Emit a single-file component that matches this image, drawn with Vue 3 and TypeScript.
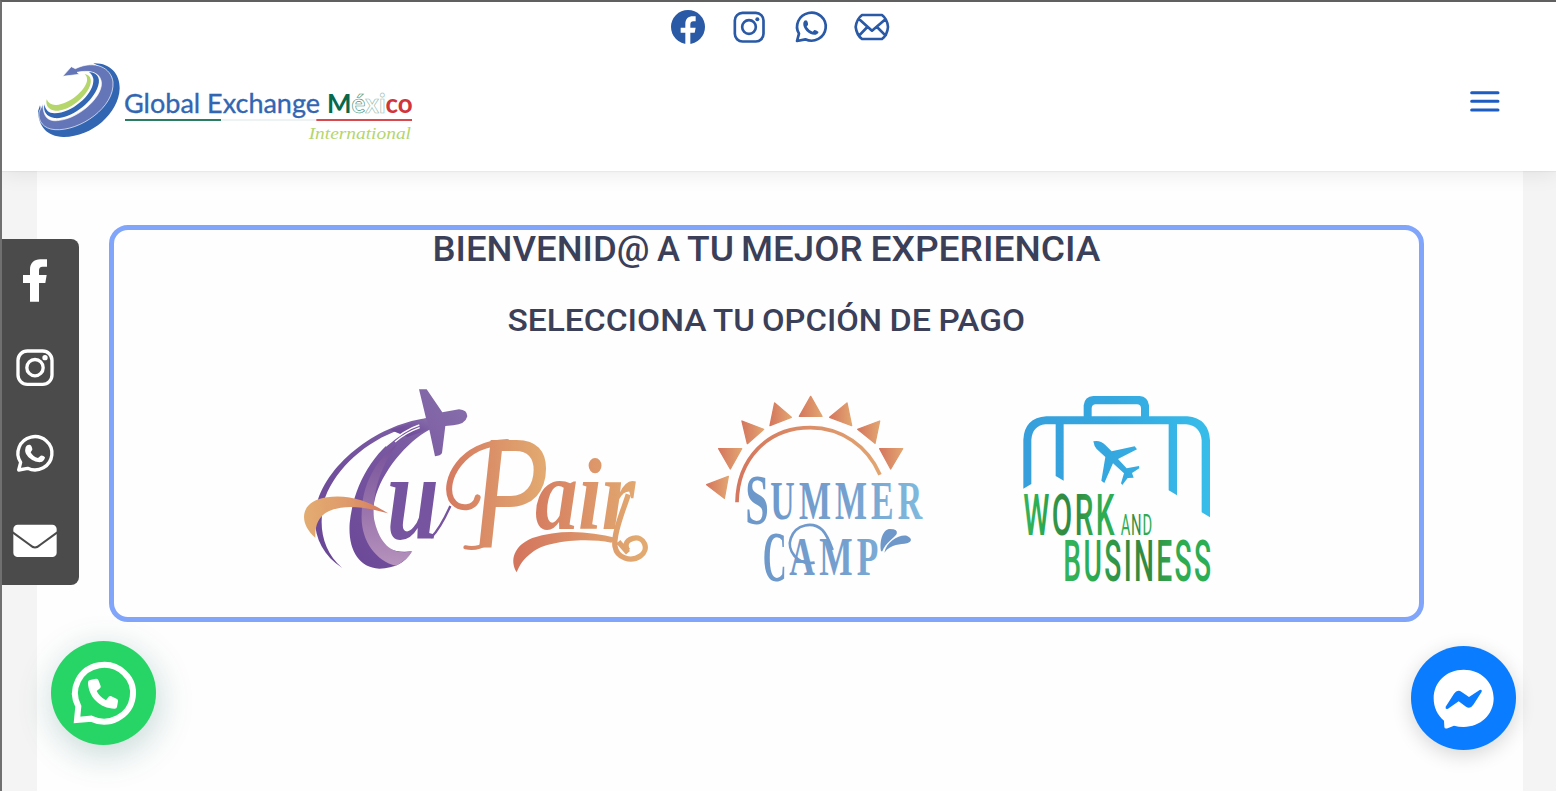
<script setup lang="ts">
type IconName = 'facebook' | 'instagram' | 'whatsapp' | 'mail'

interface Word {
  text: string
  x: number
  width: number
}

const channels: IconName[] = ['facebook', 'instagram', 'whatsapp', 'mail']
const titleWords: Word[] = [
  { text: 'BIENVENID@', x: 12.5, width: 217 },
  { text: 'A', x: 237, width: 23 },
  { text: 'TU', x: 267, width: 47 },
  { text: 'MEJOR', x: 321, width: 121.5 },
  { text: 'EXPERIENCIA', x: 450.5, width: 230 },
]
const subtitleWords: Word[] = [
  { text: 'SELECCIONA', x: 87.5, width: 199 },
  { text: 'TU', x: 293, width: 42 },
  { text: 'OPCIÓN', x: 342, width: 120 },
  { text: 'DE', x: 469.5, width: 41.5 },
  { text: 'PAGO', x: 518.5, width: 86.5 },
]
const rays: string[] = [
  'M362 49L396 109H328Z',
  'M254 69L304 112L240 137Z',
  'M156 123L221 148L172 191Z',
  'M86 206H155L121 267Z',
  'M50 314L115 289L103 355Z',
  'M471 69L485 137L419 112Z',
  'M569 123L555 190L503 148Z',
  'M569 206H638L602 267Z',
]
</script>

<template>
  <div class="page">
    <header class="header">
      <nav class="social">
        <a v-for="name in channels" :key="name" class="social-link" :aria-label="name">
          <svg v-if="name === 'facebook'" viewBox="0 0 108 108">
            <circle cx="54" cy="54" r="51" fill="currentColor" />
            <path d="M46 108V71H32V56H46V45C46 29 55 22 69 22H77V37H70C64 37 61 40 61 46V56H77L74 71H61V108Z" fill="#fff" />
          </svg>
          <svg v-else-if="name === 'instagram'" viewBox="0 0 108 108" class="line">
            <rect x="11.500" y="11.500" width="86" height="86" rx="23" />
            <circle cx="54" cy="54" r="20.500" />
            <circle cx="79" cy="31" r="6" class="dot" />
          </svg>
          <svg v-else-if="name === 'whatsapp'" viewBox="0 0 108 108" class="line">
            <path d="M18 74A43 42 0 1 1 37 91L12 96Z" />
            <path class="dot" d="M31 41Q33 34 39 34C43 34 46 44 45 47L41 53Q49 65 59 68L64 63Q68 62 76 68Q78 73 68 77C50 80 28 59 31 41Z" />
          </svg>
          <svg v-else viewBox="0 0 108 108" class="line mail">
            <path d="M24 18H84Q100 30 102 54Q100 78 84 90H24Q8 78 5 54Q8 30 24 18ZM14 29L54 65L96 29M40 54L13 82M69 54L97 82" />
          </svg>
        </a>
      </nav>
      <div class="brand-row">
        <svg class="brand" viewBox="0 0 1230 390">
          <path fill="#3266b2" d="M220 40C270 38 300 72 299 115C297 190 215 262 130 261C80 260 56 229 54 184L60 166C70 220 100 231 130 227C210 220 280 145 268 90Q259 55 220 40Z" />
          <path fill="#6576b8" stroke="#fff" stroke-width="2" d="M128 79L154 50L166 56C225 28 274 54 279 96C285 171 180 244 105 239C70 237 53 212 57 186L69 162C69 205 88 216 118 211C181 204 255 134 243 91C235 62 200 61 171 67L178 73Z" />
          <path fill="#3266b2" d="M207 66C238 68 243 91 231 117C210 165 145 209 103 204C79 201 69 184 73 163C76 181 88 191 105 190C153 190 218 137 220 94Q222 78 207 66Z" />
          <path fill="#b4d66b" d="M194 72C215 75 217 96 206 116C185 154 139 184 106 182C86 180 76 167 80 148C85 160 95 166 109 165C147 162 194 124 201 93Q203 80 194 72Z" />
          <text x="312" y="188" class="brand-name" textLength="588" lengthAdjust="spacingAndGlyphs">Global Exchange</text>
          <text x="921" y="188" class="brand-country" textLength="257" lengthAdjust="spacingAndGlyphs"><tspan class="green">M</tspan><tspan class="ghost accented">é</tspan><tspan class="ghost">xi</tspan><tspan class="red">co</tspan></text>
          <path fill="#2b7d61" d="M315 207H603V213H315Z" />
          <path fill="#edf3f2" d="M603 207H889V213H603Z" />
          <path fill="#d9484d" d="M889 207H1176V213H889Z" />
          <text x="866" y="268" class="brand-sub" textLength="307" lengthAdjust="spacingAndGlyphs">International</text>
        </svg>
        <button class="menu" aria-label="Menu">
          <svg viewBox="0 0 90 66"><path d="M5 8H84M5 34H84M5 60H84" /></svg>
        </button>
      </div>
    </header>

    <main class="content">
      <section class="panel">
        <svg class="titles" viewBox="0 0 700 125">
          <text y="30.500" class="title"><tspan v-for="word in titleWords" :key="word.text" :x="word.x" :textLength="word.width" lengthAdjust="spacingAndGlyphs">{{ word.text }}</tspan></text>
          <text y="100.500" class="subtitle"><tspan v-for="word in subtitleWords" :key="word.text" :x="word.x" :textLength="word.width" lengthAdjust="spacingAndGlyphs">{{ word.text }}</tspan></text>
        </svg>
        <div class="options">
          <svg class="au-pair" viewBox="0 0 1110 630">
            <defs>
              <linearGradient id="violet" x1="0" y1="1" x2="1" y2="0">
                <stop offset="0" stop-color="#684595" /><stop offset=".5" stop-color="#7654a0" /><stop offset="1" stop-color="#8870ab" />
              </linearGradient>
              <linearGradient id="lilac" x1="0" y1="0" x2="0" y2="1">
                <stop offset="0" stop-color="#765199" /><stop offset="1" stop-color="#b692bd" />
              </linearGradient>
              <linearGradient id="gold" x1="0" x2="1">
                <stop offset="0" stop-color="#e3ac71" /><stop offset=".5" stop-color="#df9b6b" /><stop offset="1" stop-color="#d57a61" />
              </linearGradient>
              <linearGradient id="coral" gradientUnits="userSpaceOnUse" x1="470" y1="0" x2="765" y2="0">
                <stop offset="0" stop-color="#d57a61" /><stop offset="1" stop-color="#e2aa70" />
              </linearGradient>
              <linearGradient id="coral-wide" gradientUnits="userSpaceOnUse" x1="680" y1="0" x2="1050" y2="0">
                <stop offset="0" stop-color="#d4755e" /><stop offset="1" stop-color="#e2aa70" />
              </linearGradient>
            </defs>
            <path fill="url(#violet)" d="M387 43H410L457 112L507 103Q532 105 532 124Q526 148 490 151L466 153L456 234Q452 242 435 244L418 164C351 200 274 290 254 375C235 456 259 543 365 529Q338 580 268 581C204 577 174 522 179 445C190 331 252 221 352 166L330 164C230 197 138 280 106 366C82 450 96 526 157 579C91 536 65 470 78 398C102 275 254 151 408 130Z" />
            <path fill="url(#violet)" d="M300 164L408 130L420 162L352 186Z" />
            <path fill="url(#lilac)" d="M322 207C268 275 245 366 252 431C267 503 303 542 367 529Q351 556 318 572C257 558 211 494 215 418C216 330 255 257 322 207Z" />
            <path fill="none" stroke="#fff" stroke-width="4" d="M388 150Q343 164 287 214M389 158Q345 174 315 201" />
            <path fill="url(#gold)" d="M76 488C21 440 33 377 111 367C181 357 241 382 294 415C223 395 163 387 116 409C83 425 75 455 76 488Z" />
            <text x="290" y="493" class="script-u" textLength="157" lengthAdjust="spacingAndGlyphs">u</text>
            <path fill="none" stroke="#7654a0" stroke-width="7" d="M423 488Q451 460 481 393" />
            <path fill="none" stroke="url(#coral)" stroke-width="18" stroke-linecap="round" d="M563 367C557 401 506 410 484 373C457 318 513 205 651 201" />
            <path fill="none" stroke="url(#coral)" stroke-width="12" stroke-linecap="round" d="M526 517Q562 524 589 505" />
            <text x="548" y="516" class="script-p" textLength="222" lengthAdjust="spacingAndGlyphs">P</text>
            <text x="735" y="462" class="script-air" textLength="301" lengthAdjust="spacingAndGlyphs">air</text>
            <path fill="url(#coral-wide)" d="M680 592C658 555 672 512 727 489C813 461 899 470 979 489L964 503C881 486 765 500 728 531C698 553 689 571 680 592Z" />
            <path fill="none" stroke="url(#coral-wide)" stroke-width="16" d="M1015 358C1001 403 969 475 975 514C981 550 1023 562 1051 543C1080 523 1063 482 1029 490C1003 497 1006 517 1014 527M985 500L1014 533" />
          </svg>
          <svg class="summer" viewBox="0 0 750 630">
            <defs>
              <linearGradient id="ray" x1="0" x2="1"><stop offset="0" stop-color="#d5765e" /><stop offset="1" stop-color="#e2a570" /></linearGradient>
              <linearGradient id="sky" gradientUnits="userSpaceOnUse" x1="170" y1="0" x2="695" y2="0">
                <stop offset="0" stop-color="#6c97ca" /><stop offset=".55" stop-color="#759fce" /><stop offset="1" stop-color="#80b9dd" />
              </linearGradient>
            </defs>
            <path v-for="ray in rays" :key="ray" :d="ray" fill="url(#ray)" stroke="url(#ray)" stroke-width="4" stroke-linejoin="round" />
            <path d="M141 367C143 240 229 143 361 143C455 143 533 199 570 284" fill="none" stroke="url(#ray)" stroke-width="11" />
            <g class="summer-text">
              <text x="166" y="433" class="big-cap" textLength="71" lengthAdjust="spacingAndGlyphs">S</text>
              <text x="241" y="417" class="small-cap" textLength="468" lengthAdjust="spacingAndGlyphs">UMMER</text>
              <text x="218" y="603" class="big-cap" textLength="72" lengthAdjust="spacingAndGlyphs">C</text>
              <text x="298" y="585" class="small-cap" textLength="280" lengthAdjust="spacingAndGlyphs">AMP</text>
            </g>
            <path d="M374 548C318 558 291 506 302 476C317 430 370 425 397 450Q411 464 428 510" fill="none" stroke="#7099cc" stroke-width="8" />
            <path fill="#6e98ca" d="M573 514C568 478 580 447 600 447Q625 447 620 462C610 477 587 487 577 514ZM583 518C590 484 627 463 650 467Q675 480 651 490C631 495 605 490 583 518Z" />
          </svg>
          <svg class="work" viewBox="0 0 660 630">
            <defs>
              <linearGradient id="case" gradientUnits="userSpaceOnUse" x1="40" y1="0" x2="600" y2="0"><stop offset="0" stop-color="#369fdc" /><stop offset=".5" stop-color="#35a8e0" /><stop offset="1" stop-color="#37bdea" /></linearGradient>
              <linearGradient id="leaf" x1="0" x2="1">
                <stop offset="0" stop-color="#35b35b" /><stop offset=".18" stop-color="#2cad52" /><stop offset=".42" stop-color="#338b42" /><stop offset=".58" stop-color="#338b42" /><stop offset=".75" stop-color="#2fab50" /><stop offset="1" stop-color="#2bae55" />
              </linearGradient>
            </defs>
            <path fill="url(#case)" fill-rule="evenodd" d="M40 326V179Q43 114 109 109H221V76Q224 49 250 48H389Q414 50 417 76V109H532Q596 115 600 181V412L575 397V181Q571 137 528 133H501V346L476 331V133H161V302L137 288V133H106Q67 138 64 179V312ZM245 109H393V84Q392 73 381 73H257Q246 74 245 84Z" />
            <path fill="url(#case)" d="M250 184Q270 179 286 195L305 214L374 199L381 208L324 237L350 265L387 258L388 265L366 279L371 293L353 294L337 315L333 310L342 280L309 250L283 309L274 302L286 231L260 207Q252 198 250 184Z" />
            <g fill="url(#leaf)">
              <text x="40" y="464" class="work-big" textLength="281" lengthAdjust="spacingAndGlyphs">WORK</text>
              <text x="332" y="464" class="work-small" textLength="97" lengthAdjust="spacingAndGlyphs">AND</text>
              <text x="160" y="603" class="work-big" textLength="450" lengthAdjust="spacingAndGlyphs">BUSINESS</text>
            </g>
          </svg>
        </div>
      </section>
    </main>

    <aside class="side">
      <a v-for="name in channels" :key="name" class="side-link" :aria-label="name">
        <svg v-if="name === 'facebook'" viewBox="0 0 144 144"><path fill="#fff" d="M57 134V78H36V54H57V38C57 18 69 7 88 7H108V29H95C87 29 84 33 84 41V54H107L103 78H84V134Z" /></svg>
        <svg v-else-if="name === 'instagram'" viewBox="0 0 144 144" class="line">
          <rect x="21" y="21" width="102" height="100" rx="28" /><circle cx="72" cy="71" r="24.500" /><circle class="dot" cx="102" cy="41" r="8" />
        </svg>
        <svg v-else-if="name === 'whatsapp'" viewBox="0 0 144 144" class="line">
          <path d="M29 97A51 50 0 1 1 50 115L23 120Z" />
          <path class="dot" d="M43 57Q44 46 52 45C60 42 64 52 64 59L59 67Q66 81 81 84L89 77Q96 75 102 82Q101 92 91 96C68 100 38 75 43 57Z" />
        </svg>
        <svg v-else viewBox="0 0 144 144">
          <rect x="7" y="23" width="130" height="97" rx="13" fill="#fff" /><path d="M5 46L57 84Q72 99 87 84L139 46" fill="none" stroke="#4b4b4b" stroke-width="6" />
        </svg>
      </a>
    </aside>

    <a class="fab whatsapp-fab" aria-label="WhatsApp">
      <svg viewBox="93 91 315 312">
        <path fill="none" stroke="#fff" stroke-width="18" d="M175 287A87 85 0 1 1 214 324L171 328Z" />
        <path fill="#fff" d="M204 214Q204 209 210 208L228 204Q233 204 235 208L242 226Q243 230 240 233L230 241Q239 259 258 269L266 258Q270 255 274 257L291 265Q295 267 294 272L291 289Q290 294 284 294C240 294 204 258 204 214Z" />
      </svg>
    </a>
    <a class="fab messenger-fab" aria-label="Messenger">
      <svg viewBox="92 138 315 312">
        <path fill="#fff" d="M250 209C302 209 340 246 340 295C340 344 300 381 250 381Q235 381 221 377L202 385Q192 388 192 380L191 362C171 346 160 322 160 295C160 246 198 209 250 209Z" />
        <path fill="#0a7cff" d="M196 320L221 281Q231 267 244 276L266 291L298 270Q306 267 304 275L280 313Q270 329 257 320L235 304L203 326Q194 329 196 320Z" />
      </svg>
    </a>
  </div>
</template>

<style>
body {
  overflow: hidden;
}
</style>

<style scoped>
* {
  box-sizing: border-box;
}
svg {
  display: block;
  overflow: visible;
}
.page {
  position: relative;
  width: 1556px;
  height: 791px;
  overflow: hidden;
  border-top: 2px solid #606060;
  border-left: 2px solid #707070;
  background: #f4f4f4;
  font-family: Roboto, "Liberation Sans", sans-serif;
}
.header {
  position: relative;
  z-index: 2;
  height: 169px;
  background: #fff;
  box-shadow: 0 1px 1px rgba(0, 0, 0, 0.04), 0 3px 20px rgba(0, 10, 20, 0.08);
}
.social {
  display: flex;
  gap: 25.200px;
  height: 48px;
  padding: 7px 0 0 668.200px;
  color: #2a59a5;
}
.social-link {
  width: 36px;
  height: 36px;
}
.line {
  fill: none;
  stroke: currentColor;
  stroke-width: 8;
  stroke-linejoin: round;
}
.line .dot {
  fill: currentColor;
  stroke: none;
}
.brand-row {
  display: flex;
  justify-content: space-between;
  height: 121px;
  padding-left: 18px;
}
.brand {
  width: 410px;
  height: 130px;
}
.brand-name {
  font: 400 80px Lato, sans-serif;
  fill: #3266b2;
  stroke: #3266b2;
  stroke-width: 1;
}
.brand-country {
  font: 700 80px Lato, sans-serif;
}
.green {
  fill: #08684b;
}
.red {
  fill: #d2343c;
}
.ghost {
  fill: #fff;
  stroke: #9cc2b5;
  stroke-width: 2;
}
.accented {
  stroke: #4a987c;
}
.brand-sub {
  font: italic 51px "Liberation Serif", serif;
  fill: #b4d66b;
}
.menu {
  margin: 40px 56px 0 0;
  padding: 0;
  width: 30px;
  height: 22px;
  border: 0;
  background: none;
}
.menu svg {
  width: 30px;
  height: 22px;
  fill: none;
  stroke: #1d5cc0;
  stroke-width: 9;
  stroke-linecap: round;
}
.content {
  width: 1486px;
  height: 640px;
  margin-left: 35px;
  padding: 54px 0 0 72px;
  background: #fefefe;
}
.panel {
  width: 1315px;
  height: 397px;
  border: 5px solid #82a5fc;
  border-radius: 19px;
}
.titles {
  width: 700px;
  height: 125px;
  margin-left: 306px;
}
.title,
.subtitle {
  font-family: Roboto, sans-serif;
  font-weight: 500;
  font-size: 34.600px;
  fill: #3b3f58;
}
.subtitle {
  font-size: 31px;
}
.options {
  display: flex;
  align-items: flex-start;
  margin: 20px 0 0 176px;
}
.au-pair {
  width: 370px;
  height: 210px;
}
.summer {
  width: 250px;
  height: 210px;
  margin: 5px 70px 0 30px;
}
.work {
  width: 220px;
  height: 210px;
  margin-top: 5px;
}
.script-u {
  font: italic 700 370px "Liberation Serif", serif;
  fill: #7654a0;
}
.script-p {
  font: italic 400 450px Lato, sans-serif;
  fill: url(#coral);
}
.script-air {
  font: italic 700 305px "Liberation Serif", serif;
  fill: url(#coral-wide);
}
.summer-text {
  fill: url(#sky);
  font-family: "Liberation Serif", serif;
  font-weight: 700;
}
.big-cap {
  font-size: 215px;
}
.small-cap {
  font-size: 164px;
  letter-spacing: 20px;
}
.work-big {
  font: 500 172px Roboto, sans-serif;
  letter-spacing: 14px;
}
.work-small {
  font: 400 87px Roboto, sans-serif;
  letter-spacing: 5px;
}
.side {
  position: absolute;
  z-index: 3;
  left: 0;
  top: 236.500px;
  display: flex;
  flex-direction: column;
  gap: 38.600px;
  width: 77px;
  height: 346.500px;
  padding: 18.500px 0 0 9px;
  border-radius: 0 8px 8px 0;
  background: #4b4b4b;
  color: #fff;
}
.side-link {
  width: 48px;
  height: 48px;
}
.side .line {
  stroke-width: 10;
}
.fab {
  position: absolute;
  z-index: 3;
  width: 105px;
  height: 104px;
  border-radius: 50%;
}
.whatsapp-fab {
  left: 49px;
  top: 638.500px;
  background: #27d466;
  box-shadow: 2px 9px 36px rgba(7, 94, 84, 0.24);
}
.messenger-fab {
  left: 1408.500px;
  top: 644px;
  background: #0a7cff;
  box-shadow: 0 5px 20px rgba(0, 0, 0, 0.16);
}
</style>
